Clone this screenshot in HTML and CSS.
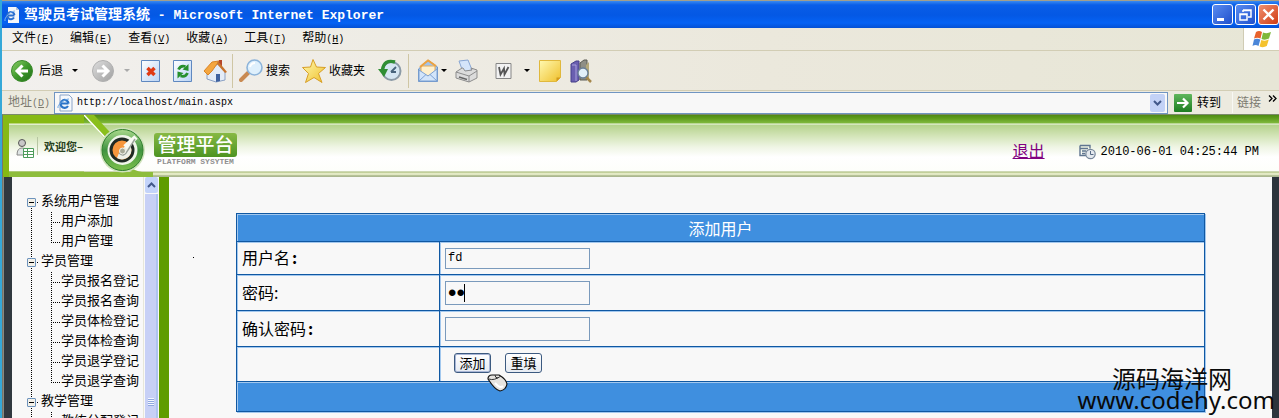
FILE: index.html
```
<!DOCTYPE html>
<html lang="zh-CN">
<head>
<meta charset="utf-8">
<title>驾驶员考试管理系统</title>
<link rel="stylesheet" href="styles.css">
</head>
<body>
<svg class="defs" aria-hidden="true">
  <defs>
    <linearGradient id="gGreen" x1="0" y1="0" x2="1" y2="1"><stop offset="0" stop-color="#8fd06a"/><stop offset=".5" stop-color="#3f9a2c"/><stop offset="1" stop-color="#1f6d18"/></linearGradient>
    <linearGradient id="gGrey" x1="0" y1="0" x2="1" y2="1"><stop offset="0" stop-color="#dedede"/><stop offset="1" stop-color="#9f9f9f"/></linearGradient>
    <linearGradient id="gPage" x1="0" y1="0" x2="1" y2="1"><stop offset="0" stop-color="#ffffff"/><stop offset="1" stop-color="#b9d3f5"/></linearGradient>
    <linearGradient id="gGold" x1="0" y1="0" x2="1" y2="1"><stop offset="0" stop-color="#fff9b0"/><stop offset="1" stop-color="#efc02c"/></linearGradient>
    <linearGradient id="gGo" x1="0" y1="0" x2="0" y2="1"><stop offset="0" stop-color="#5fb65c"/><stop offset="1" stop-color="#1d7d20"/></linearGradient>
    <linearGradient id="gRing" x1="0" y1="0" x2="0" y2="1"><stop offset="0" stop-color="#a9d98c"/><stop offset=".5" stop-color="#3f9340"/><stop offset="1" stop-color="#7cc04c"/></linearGradient>
  </defs>
</svg>

<header class="titlebar">
  <svg class="app-icon" width="16" height="16" viewBox="0 0 16 16"><path d="M4 0h8l3 3v13H4z" fill="#f4f6fa"/><path d="M12 0v3h3z" fill="#b8c4d8"/><path d="M10.500 8.500H3.500M10 10.500a3.600 3.600 0 1 1 .5-2.500" fill="none" stroke="#2b6fd0" stroke-width="2"/><path d="M1 14C0 11 6 4 11 4" fill="none" stroke="#7fb2ea"/></svg>
  <h1 class="title">驾驶员考试管理系统<span class="title-latin"> - Microsoft Internet Explorer</span></h1>
  <div class="window-buttons">
    <button class="win-btn" aria-label="最小化"><svg width="19" height="19" viewBox="0 0 19 19"><path d="M4 13h7v3H4z" fill="#fff"/></svg></button>
    <button class="win-btn" aria-label="还原"><svg width="19" height="19" viewBox="0 0 19 19"><path d="M7 5h8v7h-3M7 5v2M7 5.500h8M4 9h7v6H4zM4 9.500h7" fill="none" stroke="#fff" stroke-width="1.500"/></svg></button>
    <button class="win-btn win-close" aria-label="关闭"><svg width="19" height="19" viewBox="0 0 19 19"><path d="M4.500 4.500l10 10M14.500 4.500l-10 10" stroke="#fff" stroke-width="2.400"/></svg></button>
  </div>
</header>

<nav class="menubar">
  <button class="menu">文件<span class="key">(<u>F</u>)</span></button>
  <button class="menu">编辑<span class="key">(<u>E</u>)</span></button>
  <button class="menu">查看<span class="key">(<u>V</u>)</span></button>
  <button class="menu">收藏<span class="key">(<u>A</u>)</span></button>
  <button class="menu">工具<span class="key">(<u>T</u>)</span></button>
  <button class="menu">帮助<span class="key">(<u>H</u>)</span></button>
  <div class="flag"><svg width="20" height="18" viewBox="0 0 20 18"><path d="M4 2q3-2 6 0L8.500 8.500q-3-1.500-6.500 0z" fill="#e8622c"/><path d="M11 2.500q4 1.500 8-.5l-2 6.500q-4 2-7.500.5z" fill="#7fb83a"/><path d="M2 9.500q3-1.500 6.300 0L6.500 16q-3-2-6 0z" fill="#4a86d8"/><path d="M9.300 10q4 1.500 7.500-.5l-2 6.500q-3.500 2-7.200.5z" fill="#f4c22e"/></svg></div>
</nav>

<div class="toolbar">
  <button class="tool back"><svg width="22" height="24" viewBox="0 0 22 24"><circle cx="11" cy="12" r="10.500" fill="url(#gGreen)" stroke="#3b8a2c"/><path d="M17 12H6.500M11.500 6.500L6 12l5.500 5.500" fill="none" stroke="#fff" stroke-width="3"/></svg><span>后退</span></button>
  <button class="caret caret-back" aria-label="后退列表"></button>
  <button class="tool forward" aria-label="前进"><svg width="22" height="24" viewBox="0 0 22 24"><circle cx="11" cy="12" r="10.500" fill="url(#gGrey)" stroke="#b0b0b0"/><path d="M5 12h10.500M10.500 6.500L16 12l-5.500 5.500" fill="none" stroke="#fff" stroke-width="3"/></svg></button>
  <button class="caret caret-forward" aria-label="前进列表"></button>
  <button class="tool stop" aria-label="停止"><svg width="20" height="24" viewBox="0 0 20 24"><path d="M.5 1.500h18v21H.5z" fill="url(#gPage)" stroke="#5f88c0"/><path d="M6.500 9l7 7M13.500 9l-7 7" stroke="#e03a14" stroke-width="3.500"/></svg></button>
  <button class="tool refresh" aria-label="刷新"><svg width="20" height="24" viewBox="0 0 20 24"><path d="M.5 1.500h18v21H.5z" fill="url(#gPage)" stroke="#5f88c0"/><path d="M5.500 10.500q2-4.500 7-3" fill="none" stroke="#27902c" stroke-width="2.800"/><path d="M15.500 5v7l-6-1.500z" fill="#27902c"/><path d="M14.500 14q-2 4.500-7 3" fill="none" stroke="#27902c" stroke-width="2.800"/><path d="M4.500 19.500v-7l6 1.500z" fill="#27902c"/></svg></button>
  <button class="tool home" aria-label="主页"><svg width="24" height="24" viewBox="0 0 24 24"><path d="M16 1h3v6h-3z" fill="#b5462a"/><path d="M4 12l11-7 7 8v8l-9 2-9-3z" fill="#e4ecf8" stroke="#8aa0c4"/><path d="M1 12L9 3l7-1-7 10-4 4z" fill="#f4a640" stroke="#d98426"/><path d="M15 2l9 11-2 1-8-9z" fill="#c8742c"/><path d="M13 15h4v7l-4 1z" fill="#3f62a0"/></svg></button>
  <i class="sep sep-a"></i>
  <button class="tool search"><svg width="24" height="24" viewBox="0 0 24 24"><path d="M10 13l-8 8" stroke="#c98a52" stroke-width="4" stroke-linecap="round"/><circle cx="15.500" cy="8.500" r="7.500" fill="#dff0fc" stroke="#8db4da" stroke-width="1.600"/><path d="M11 8q1-4 5-4" fill="none" stroke="#fff" stroke-width="2"/></svg><span>搜索</span></button>
  <button class="tool favorites"><svg width="24" height="24" viewBox="0 0 24 24"><path d="M11 .5l3.500 7.500 9 .5-7 6 3.500 9-8-5-8.500 5 3-9-6-6 8-.5z" fill="url(#gGold)" stroke="#d79e26"/></svg><span>收藏夹</span></button>
  <button class="tool history" aria-label="历史"><svg width="24" height="24" viewBox="0 0 24 24"><circle cx="13.500" cy="12" r="9" fill="#d5e6f2" stroke="#8b9aa6" stroke-width="2"/><path d="M13 13l5-5M13 13h5" stroke="#48647c" stroke-width="1.800"/><path d="M17 3Q6 0 4.500 11" fill="none" stroke="#2f8e34" stroke-width="3.400"/><path d="M0 10h10l-4 8z" fill="#2f8e34"/></svg></button>
  <i class="sep sep-b"></i>
  <button class="tool mail" aria-label="邮件"><svg width="20" height="24" viewBox="0 0 20 24"><path d="M.5 10L10 1l9.500 7v14.500H.5z" fill="#9fc4ee" stroke="#6f95c8"/><path d="M3 7h14v7l-7 3-7-3z" fill="#fff0cc" stroke="#e6ac58"/><path d="M2 8l8-6.500L18 7" fill="none" stroke="#eda23e" stroke-width="2"/><path d="M1 11l9 6 9-7v12H1z" fill="#d3e5fa" stroke="#7da2d4"/><path d="M1 22l7-6.500M19 22l-7-6.500" stroke="#7da2d4"/></svg></button>
  <button class="caret caret-mail" aria-label="邮件列表"></button>
  <button class="tool print" aria-label="打印"><svg width="24" height="24" viewBox="0 0 24 24"><path d="M4 2l9-1 4 10-9 2z" fill="#d4e4fa" stroke="#88a6d4"/><path d="M1 13l6-4h1l2 3 7-1-1-2 6 2v8l-8 4-13-4z" fill="#dcdcdc" stroke="#8d8d8d"/><path d="M1 13l13 4 8-5M14 17v6" fill="none" stroke="#8d8d8d"/><path d="M4 18l8 2.500" stroke="#666" stroke-width="1.500"/></svg></button>
  <button class="tool word" aria-label="编辑"><svg width="17" height="24" viewBox="0 0 17 24"><path d="M1 4.500h15v15H1z" fill="#f2f2f2" stroke="#868686"/><path d="M4 8l1.500 7.500 3.500-6 .5 6L13.500 8" fill="none" stroke="#555" stroke-width="1.800"/></svg></button>
  <button class="caret caret-word" aria-label="编辑列表"></button>
  <button class="tool note" aria-label="讨论"><svg width="22" height="24" viewBox="0 0 22 24"><path d="M.5 1.500h21v17l-4 4H.5z" fill="url(#gGold)" stroke="#e0b83c"/><path d="M21.500 18.500h-4v4z" fill="#d29a1c"/></svg></button>
  <button class="tool research" aria-label="信息检索"><svg width="23" height="24" viewBox="0 0 23 24"><path d="M1 5l5-3h3v19l-3 2H1z" fill="#6a5fb0" stroke="#46408a"/><path d="M2 6h4v16" fill="none" stroke="#a9a2dc"/><path d="M10 4l4-3h3v20h-7z" fill="#8f8f86" stroke="#5c5c55"/><path d="M16 20V6l3-3v17z" fill="#b5a97a"/><path d="M16 18l5 5" stroke="#a5874c" stroke-width="2.500"/><circle cx="13" cy="14" r="5" fill="#e2f0fa" stroke="#6a7f96" stroke-width="1.400"/></svg></button>
</div>

<form class="addressbar" onsubmit="return false">
  <label class="addr-label" for="addr">地址<span class="key">(<u>D</u>)</span></label>
  <div class="addr-field">
    <svg width="16" height="18" viewBox="0 0 16 18"><path d="M3 1h9l3 3v13H3z" fill="#f5f8fc" stroke="#8ba4c8"/><path d="M11.500 9.500h-7M11 12a4 4 0 1 1 .6-2.500" fill="none" stroke="#2b74c8" stroke-width="2.200"/><path d="M1 14C0 11 7 5 12 5" fill="none" stroke="#6aa6e4"/></svg>
    <input id="addr" class="addr-input" type="text" value="http://localhost/main.aspx">
    <button class="addr-drop" type="button" aria-label="展开"><svg width="9" height="6" viewBox="0 0 9 6"><path d="M1 1l3.500 3.500L8 1" fill="none" stroke="#42588a" stroke-width="2"/></svg></button>
  </div>
  <button class="go" type="submit"><svg width="18" height="18" viewBox="0 0 18 18"><rect width="18" height="18" rx="1" fill="url(#gGo)"/><path d="M3 9h10M9 4.500L13.500 9 9 13.500" fill="none" stroke="#fff" stroke-width="2.200"/></svg><span>转到</span></button>
  <button class="links" type="button"><span>链接</span><svg width="9" height="7" viewBox="0 0 9 7"><path d="M1 .5l3 3-3 3M5 .5l3 3-3 3" fill="none" stroke="#000" stroke-width="1.300"/></svg></button>
</form>

<div class="page">
  <header class="banner">
    <div class="welcome">
      <svg width="18" height="20" viewBox="0 0 18 20"><circle cx="6" cy="4" r="3.500" fill="#c8c8c8" stroke="#555"/><path d="M1 16q0-7 5-7 4 0 4 2v5z" fill="#dfe5e5" stroke="#888"/><path d="M7.500 9.500h10v9h-10z" fill="#fff" stroke="#4d9c5c"/><path d="M7.500 12.500h10M7.500 15.500h10M11.500 9.500v9" stroke="#4d9c5c"/></svg>
      <span class="hello">欢迎您–</span>
    </div>
    <svg class="emblem" width="69" height="62" viewBox="0 0 69 62"><path d="M0 0h10l26 28-8 4z" fill="#8abf1c"/><path d="M0 0l28 30" stroke="#fff" stroke-width="1.500"/><path d="M0 57h48q-4-1-6-7 9 6 16 7h11v5H0z" fill="#8ebd3c"/><circle cx="38.500" cy="35" r="22.500" fill="#cfe2bb"/><circle cx="38.500" cy="35" r="20.500" fill="url(#gRing)" stroke="#2f7f2c"/><circle cx="38.500" cy="35" r="15" fill="#f0f6ea"/><circle cx="38" cy="35" r="11" fill="#f6963c" stroke="#1f2a24" stroke-width="3"/><path d="M45 28.500a9.500 9.500 0 0 1-12 14.500q2-8 12-14.500z" fill="#eef0e8"/><path d="M52 22l-11 10" stroke="#f8faf4" stroke-width="5"/><path d="M35 38q5 5 9-3l7-11" fill="none" stroke="#9aa29a" stroke-width="1.500"/><circle cx="38.500" cy="36" r="3" fill="#a8aa98" stroke="#f4f4ec"/></svg>
    <div class="brand">
      <strong class="brand-name">管理平台</strong>
      <small class="brand-sub">PLATFORM SYSYTEM</small>
    </div>
    <a class="logout" href="#">退出</a>
    <svg class="clock" width="17" height="16" viewBox="0 0 17 16"><path d="M1 1.500h10v3M1 1.500v10h6M1 4.500h8M3 7h4M3 9.500h3" fill="none" stroke="#5f7590" stroke-width="1.400"/><circle cx="11.500" cy="10" r="4.700" fill="#e4e9ee" stroke="#76869a" stroke-width="1.200"/><path d="M11.500 7v3.500h3" fill="none" stroke="#566a84"/></svg>
    <time class="now">2010-06-01 04:25:44 PM</time>
  </header>

  <div class="body">
    <nav class="side">
      <ul class="tree">
        <li><div class="node"><button class="toggle" aria-label="折叠"></button><a href="#">系统用户管理</a></div>
          <ul class="kids"><li><a href="#">用户添加</a></li><li><a href="#">用户管理</a></li></ul></li>
        <li><div class="node"><button class="toggle" aria-label="折叠"></button><a href="#">学员管理</a></div>
          <ul class="kids"><li><a href="#">学员报名登记</a></li><li><a href="#">学员报名查询</a></li><li><a href="#">学员体检登记</a></li><li><a href="#">学员体检查询</a></li><li><a href="#">学员退学登记</a></li><li><a href="#">学员退学查询</a></li></ul></li>
        <li><div class="node"><button class="toggle" aria-label="折叠"></button><a href="#">教学管理</a></div>
          <ul class="kids"><li><a href="#">教练分配登记</a></li></ul></li>
      </ul>
    </nav>
    <div class="scroll">
      <button class="scroll-up" aria-label="向上滚动"><svg width="9" height="6" viewBox="0 0 9 6"><path d="M1 5l3.500-3.500L8 5" fill="none" stroke="#42588a" stroke-width="2"/></svg></button>
      <div class="thumb"><i class="grip"></i></div>
    </div>
    <main class="content">
      <i class="speck"></i>
      <form onsubmit="return false">
        <table class="form">
          <thead><tr class="r-head"><th colspan="2">添加用户</th></tr></thead>
          <tbody>
            <tr class="r-user"><td class="name"><label for="user">用户名<b>:</b></label></td><td><input id="user" class="box box-short" type="text" value="fd"></td></tr>
            <tr class="r-field"><td class="name"><label for="pass">密码:</label></td><td><span class="pass"><input id="pass" class="box" type="password" value="fd"><i class="insertion"></i></span></td></tr>
            <tr class="r-field"><td class="name"><label for="again">确认密码<b>:</b></label></td><td><input id="again" class="box" type="password"></td></tr>
            <tr class="r-actions"><td class="name"></td><td><div class="actions"><button class="btn btn-default" type="submit">添加</button><button class="btn" type="reset">重填</button></div></td></tr>
          </tbody>
          <tfoot><tr class="r-foot"><td colspan="2"></td></tr></tfoot>
        </table>
      </form>
    </main>
  </div>
</div>

<svg class="pointer" width="22" height="18" viewBox="0 0 22 18"><path d="M2 5Q2 1 6 1h7q7 4 8 9-1 6-7 7Q9 16 2 5z" fill="#e6e4e0" stroke="#111" stroke-width="1.200"/><path d="M3 5q5 2 12-3M9 1q0 3 3 3" fill="none" stroke="#333"/><path d="M9 9q5 6 8 3" fill="none" stroke="#fff" stroke-width="2"/></svg>
<div class="watermark"><span class="wm-name">源码海洋网</span><span class="wm-url">www.codehy.com</span></div>
</body>
</html>
```
FILE: styles.css
```
* { box-sizing: border-box; }

body {
  margin: 0;
  height: 100vh;
  overflow: hidden;
  display: flex;
  flex-direction: column;
  position: relative;
  border-left: 2px solid #35a8d8;
  background: #f8f8f8;
  color: #000;
  font: 12px/16px "Liberation Sans", "Noto Sans CJK SC", sans-serif;
}

button {
  padding: 0;
  border: 0;
  background: none;
  color: inherit;
  font: inherit;
}

svg { display: block; flex: none; }
ul { margin: 0; padding: 0; list-style: none; }
.defs { position: absolute; width: 0; height: 0; }

/* Title bar */
.titlebar {
  flex: none;
  display: flex;
  align-items: center;
  height: 28px;
  padding-left: 2px;
  border-top: 1px solid #a39f8c;
  background: linear-gradient(#3a8af0 0, #0a5ee8 4px, #0458e4 14px, #0562f4 22px, #0450d4 100%);
}
.title {
  margin: 0 auto 0 4px;
  color: #fff;
  font: bold 14px/20px "Noto Sans CJK SC", sans-serif;
  white-space: pre;
}
.title-latin { font: bold 13px/20px "Liberation Mono", monospace; }
.window-buttons { display: flex; gap: 2px; }
.win-btn {
  width: 21px;
  height: 21px;
  border: 1px solid #fff;
  border-radius: 3px;
  background: linear-gradient(135deg, #5a8cf0, #1f50cc);
}
.win-close { background: linear-gradient(135deg, #f09070, #d03c14); }

/* Menu */
.menubar {
  flex: none;
  display: flex;
  align-items: center;
  gap: 16px;
  height: 23px;
  padding-left: 10px;
  border-bottom: 1px solid #d2cdb4;
  background: linear-gradient(90deg, #f1f0ee, #ebe8dc 60%, #e7e6d6);
}
.key { font: 10px/16px "Liberation Mono", monospace; }
.flag {
  display: flex;
  align-items: center;
  justify-content: center;
  width: 36px;
  height: 22px;
  margin-left: auto;
  border-left: 1px solid #d0ccb4;
  background: #fff;
}

/* Toolbar */
.toolbar {
  flex: none;
  display: flex;
  align-items: center;
  height: 40px;
  padding-left: 9px;
  border-bottom: 1px solid #d2cdb4;
  background: linear-gradient(90deg, #f2f0ee, #ebe8dc 60%, #e7e6d6);
}
.tool { display: flex; align-items: center; gap: 3px; }
.back { gap: 6px; }
.forward { margin-left: 14px; }
.stop { margin-left: 11px; }
.refresh { margin-left: 12px; }
.home { margin-left: 10px; }
.search { margin-left: 6px; }
.favorites { margin-left: 12px; }
.history { margin-left: 13px; }
.mail { margin-left: 9px; }
.print { margin-left: 8px; }
.word { margin-left: 16px; }
.note { margin-left: 9px; }
.research { margin-left: 9px; }
.sep { width: 1px; height: 34px; background: #cfc6a4; }
.sep-a { margin-left: 5px; }
.sep-b { margin-left: 6px; }
.caret {
  border: 3px solid transparent;
  border-top-color: #000;
  border-bottom: 0;
}
.caret-back { margin-left: 9px; }
.caret-forward { margin-left: 10px; border-top-color: #aaa; }
.caret-mail { margin-left: 3px; }
.caret-word { margin-left: 12px; }

/* Address bar */
.addressbar {
  flex: none;
  display: flex;
  align-items: center;
  height: 24px;
  padding-left: 6px;
  border-bottom: 1px solid #7a8a6a;
  background: #eceadf;
}
.addr-label { margin-right: 4px; color: #7c7a70; }
.addr-field {
  flex: 1;
  display: flex;
  align-items: center;
  height: 22px;
  padding: 0 2px;
  border: 1px solid #7095c2;
  background: #f8f8f8;
}
.addr-input {
  flex: 1;
  min-width: 0;
  padding: 0 0 0 4px;
  border: 0;
  background: none;
  font: 10px/16px "Liberation Mono", monospace;
}
.addr-drop {
  display: grid;
  place-items: center;
  width: 15px;
  height: 18px;
  border-radius: 2px;
  background: #c3d2f6;
}
.go { display: flex; align-items: center; gap: 5px; margin: 0 11px 0 6px; }
.links {
  display: flex;
  align-items: center;
  gap: 7px;
  height: 21px;
  padding: 0 2px 0 4px;
  border-left: 1px solid #f8f8f4;
  color: #7c7a70;
}
.links svg { margin-bottom: 8px; }

/* Page banner */
.page {
  flex: 1;
  min-height: 0;
  display: flex;
  flex-direction: column;
  border-left: 1px solid #77766a;
}
.banner {
  flex: none;
  display: flex;
  align-items: center;
  height: 62px;
  background: linear-gradient(#4f8a14 0, #5d9c1c 3px, #7fb83c 8px, #f4f8ec 9px, #b5d38c 10px, #d6e6bc 22px, #eff5e4 32px, #fff 42px, #fdfefa 56px, #9fb36c 57px, #e6ecc8 58px, #dfe6c0 60px, #8f9f70 61px, #c8d0b0 62px);
}
.welcome {
  flex: none;
  display: flex;
  align-items: center;
  gap: 3px;
  width: 81px;
  height: 62px;
  padding: 6px 0 0 7px;
  border-left: 6px solid #86b914;
  background: linear-gradient(#86b914 8px, #eef5e0 9px, transparent 10px, transparent 56px, #8ebd3c 57px);
}
.hello {
  margin-bottom: 6px;
  padding-left: 6px;
  border-left: 1px solid #b7c6a2;
  color: #26401c;
  font: bold 11px/18px "Noto Sans CJK SC", sans-serif;
  white-space: nowrap;
}
.brand { display: flex; flex-direction: column; align-items: center; margin: 7px auto 0 1px; }
.brand-name {
  width: 83px;
  height: 24px;
  border-radius: 3px;
  background: linear-gradient(#87b944, #4d9422);
  color: #fff;
  font: 500 19px/22px "Noto Sans CJK SC", sans-serif;
  text-align: center;
}
.brand-sub { color: #909090; font: bold 8px/10px "Liberation Mono", monospace; }
.logout { margin: 8px 34px 0 0; color: #800080; font: 16px/20px "Noto Sans CJK SC", sans-serif; }
.clock { margin: 12px 5px 0 0; }
.now { margin: 12px 20px 0 0; font: 12px/16px "Liberation Mono", monospace; }

/* Body frames */
.body {
  flex: 1;
  min-height: 0;
  display: flex;
  overflow: hidden;
  border-left: 1px solid #8a8a80;
  border-right: 7px solid #2c343c;
}
.side {
  flex: none;
  width: 139px;
  overflow: hidden;
  padding-top: 13px;
  border-left: 8px solid #30383f;
}
.side a { color: #000; font: 13px/20px "Noto Sans CJK SC", sans-serif; text-decoration: none; white-space: nowrap; }
.tree {
  padding-left: 15px;
  background: repeating-linear-gradient(#000 0 1px, transparent 1px 2px) 19px 12px / 1px 100% no-repeat;
}
.node { display: flex; align-items: center; height: 20px; }
.toggle {
  width: 9px;
  height: 9px;
  margin: 5px 5px 0 0;
  border: 1px solid #6d93bd;
  border-radius: 1px;
  background: linear-gradient(#000, #000) center / 5px 1px no-repeat, #f2f0e8;
  box-shadow: 6px 0 0 -4px #000;
}
.kids {
  margin-left: 24px;
  background: repeating-linear-gradient(#000 0 1px, transparent 1px 2px) 0 2px / 1px calc(100% - 10px) no-repeat;
}
.kids li { display: flex; align-items: center; height: 20px; }
.kids li::before {
  content: "";
  flex: none;
  width: 10px;
  height: 1px;
  margin-top: 5px;
  background: repeating-linear-gradient(90deg, #000 0 1px, transparent 1px 2px);
}

.scroll {
  flex: none;
  width: 26px;
  display: flex;
  flex-direction: column;
  gap: 1px;
  border-left: 1px solid #e6e6da;
  border-right: 10px solid #5f9c00;
  background: #f8f8f8;
}
.scroll-up {
  display: grid;
  place-items: center;
  flex: none;
  height: 16px;
  margin: 0 1px;
  border-radius: 2px;
  background: #c3d3fa;
}
.thumb {
  flex: 1;
  display: flex;
  flex-direction: column;
  justify-content: flex-end;
  align-items: center;
  margin: 0 1px;
  padding-bottom: 12px;
  border-right: 2px solid #adc4f0;
  background: #c7d0f6;
}
.grip { width: 6px; height: 8px; background: repeating-linear-gradient(#f4f7ff 0 1px, #8fa8e0 1px 2px); }

/* Form */
.content { flex: 1; min-width: 0; position: relative; padding: 36px 67px 0; }
.speck { position: absolute; left: 24px; top: 80px; width: 1px; height: 1px; background: #000; }
.form {
  width: 100%;
  border: solid #1058a2;
  border-width: 0 1px 1px 0;
  border-spacing: 0;
  box-shadow: 1px 1px #a3c8ee;
  font: 16px/20px "Noto Sans CJK SC", sans-serif;
}
.form th, .form td {
  padding: 0 5px;
  border: solid #1058a2;
  border-width: 1px 0 0 1px;
  box-shadow: inset 1px 1px #a3c8ee;
}
.form th { background: #3f8fdf; color: #fff; font-weight: 400; }
.form .name { width: 203px; padding-bottom: 2px; }
.form b { padding-left: 2px; font-weight: 700; }
.r-head { height: 28px; }
.r-user { height: 33px; }
.r-field { height: 36px; }
.r-actions { height: 35px; }
.r-foot { height: 30px; }
.form .r-foot td { background: #3f8fdf; }
.box {
  display: block;
  width: 145px;
  height: 24px;
  padding: 0 2px;
  border: 1px solid #7a9abc;
  border-radius: 0;
  background: #f8f8f8;
  font: 24px/20px "Liberation Sans", sans-serif;
}
.box-short { height: 21px; font: 12px/18px "Liberation Mono", monospace; }
.pass { position: relative; display: block; }
.insertion { position: absolute; left: 19px; top: 3px; width: 1px; height: 18px; background: #000; }
.actions { display: flex; gap: 14px; padding: 0 0 2px 9px; }
.btn {
  width: 37px;
  height: 20px;
  border: 1px solid #3c5a80;
  border-radius: 3px;
  background: linear-gradient(#fff, #e6ebf2);
  font: 13px/16px "Noto Sans CJK SC", sans-serif;
}
.btn-default { box-shadow: inset 0 0 0 1px #a9b6d6; }

/* Overlays */
.pointer { position: absolute; left: 484px; top: 374px; }
.watermark {
  position: absolute;
  right: 4px;
  bottom: 8px;
  display: flex;
  flex-direction: column;
  align-items: flex-end;
  color: #0a0a0a;
  pointer-events: none;
}
.wm-name { margin-right: 43px; font: 24px/24px "Noto Sans CJK SC", sans-serif; }
.wm-url { font: 24px/20px "Noto Sans", "Open Sans", sans-serif; }
```
